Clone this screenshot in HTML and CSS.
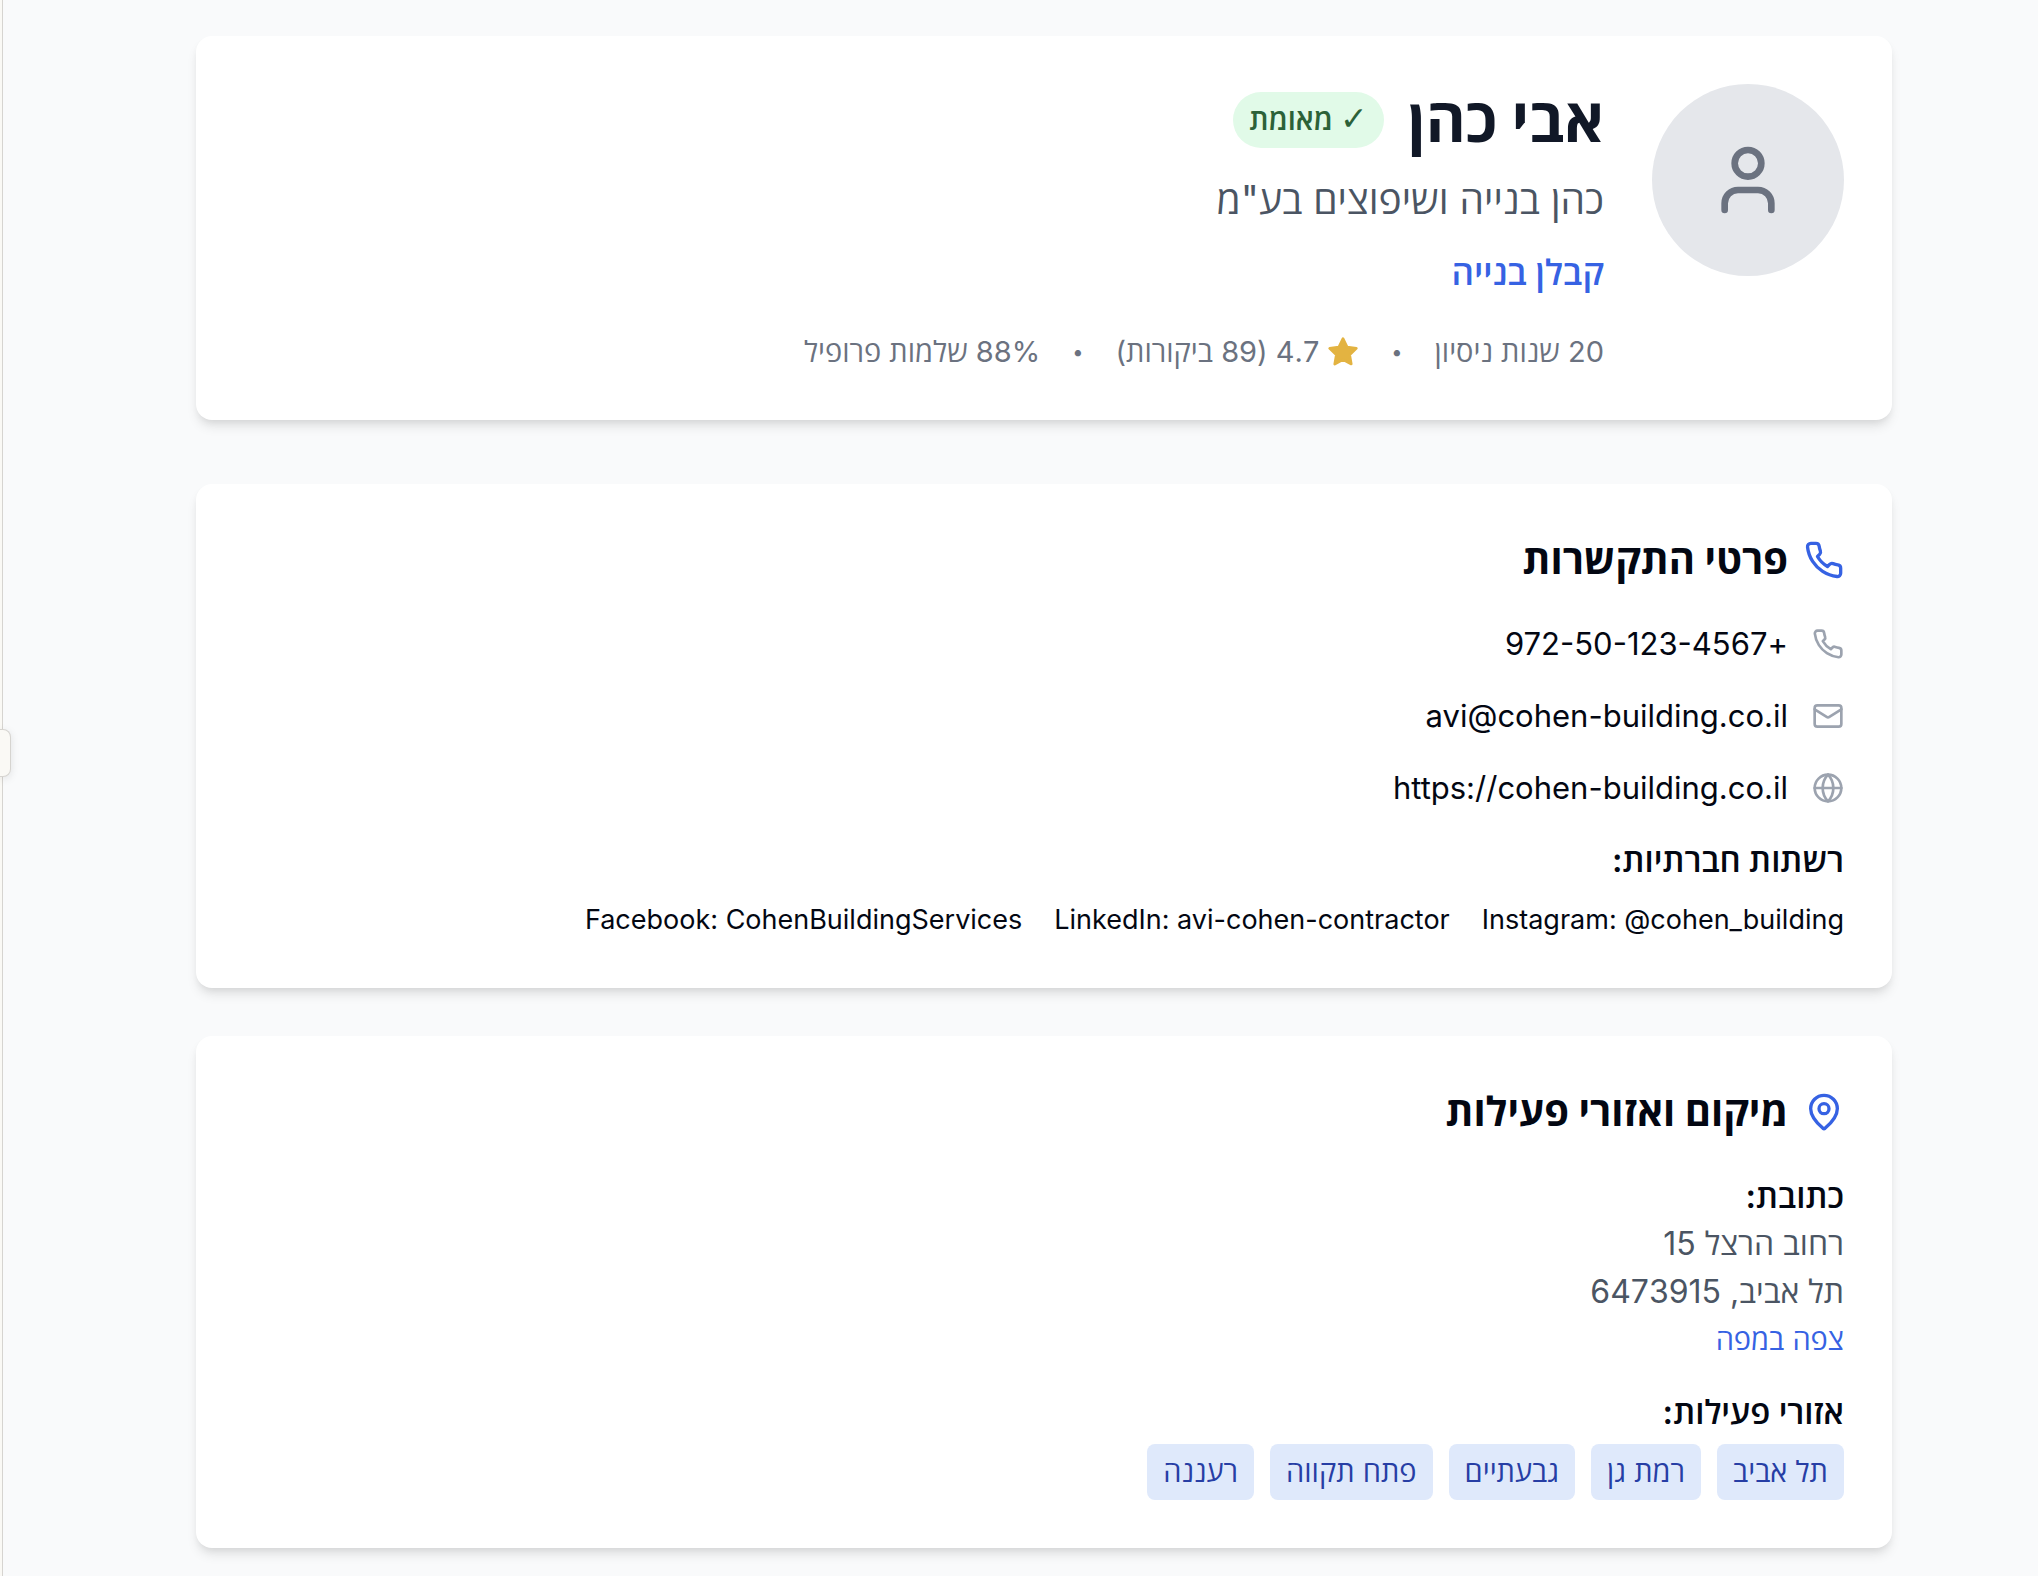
FILE: index.html
```html
<!DOCTYPE html>
<html lang="he" dir="rtl">
<head>
<meta charset="utf-8">
<meta name="viewport" content="width=device-width, initial-scale=1">
<title>אבי כהן</title>
<link rel="stylesheet" href="styles.css">
</head>
<body>
<button class="panel-handle" type="button" aria-label="פתיחת חלונית"></button>
<main class="page">
  <header class="card profile">
    <div class="avatar">
      <svg class="avatar-icon" viewBox="0 0 24 24" aria-hidden="true"><path d="M19 21v-2a4 4 0 0 0-4-4H9a4 4 0 0 0-4 4v2"/><circle cx="12" cy="7" r="4"/></svg>
    </div>
    <div class="profile-info">
      <div class="name-row">
        <h1 class="name">אבי כהן</h1>
        <span class="badge"><span class="check">✓</span> מאומת</span>
      </div>
      <p class="company">כהן בנייה ושיפוצים בע"מ</p>
      <p class="trade">קבלן בנייה</p>
      <div class="stats">
        <span>20 שנות ניסיון</span>
        <span class="dot">•</span>
        <span class="rating">
          <svg class="star" viewBox="0 0 24 24" aria-hidden="true"><polygon points="12 2 15.09 8.26 22 9.27 17 14.14 18.18 21.02 12 17.77 5.82 21.02 7 14.14 2 9.27 8.91 8.26 12 2"/></svg>
          <span>4.7 (89 ביקורות)</span>
        </span>
        <span class="dot">•</span>
        <span>88% שלמות פרופיל</span>
      </div>
    </div>
  </header>

  <section class="card">
    <h2 class="card-title">
      <svg class="title-icon" viewBox="0 0 24 24" aria-hidden="true"><path d="M22 16.92v3a2 2 0 0 1-2.18 2 19.79 19.79 0 0 1-8.63-3.07 19.5 19.5 0 0 1-6-6 19.79 19.79 0 0 1-3.07-8.67A2 2 0 0 1 4.11 2h3a2 2 0 0 1 2 1.72 12.84 12.84 0 0 0 .7 2.81 2 2 0 0 1-.45 2.11L8.09 9.91a16 16 0 0 0 6 6l1.27-1.27a2 2 0 0 1 2.11-.45 12.84 12.84 0 0 0 2.81.7A2 2 0 0 1 22 16.92z"/></svg>
      פרטי התקשרות
    </h2>
    <ul class="contacts">
      <li class="contact">
        <svg class="contact-icon" viewBox="0 0 24 24" aria-hidden="true"><path d="M22 16.92v3a2 2 0 0 1-2.18 2 19.79 19.79 0 0 1-8.63-3.07 19.5 19.5 0 0 1-6-6 19.79 19.79 0 0 1-3.07-8.67A2 2 0 0 1 4.11 2h3a2 2 0 0 1 2 1.72 12.84 12.84 0 0 0 .7 2.81 2 2 0 0 1-.45 2.11L8.09 9.91a16 16 0 0 0 6 6l1.27-1.27a2 2 0 0 1 2.11-.45 12.84 12.84 0 0 0 2.81.7A2 2 0 0 1 22 16.92z"/></svg>
        <a href="tel:+972501234567">+972-50-123-4567</a>
      </li>
      <li class="contact">
        <svg class="contact-icon" viewBox="0 0 24 24" aria-hidden="true"><rect width="20" height="16" x="2" y="4" rx="2"/><path d="m22 7-8.97 5.7a1.94 1.94 0 0 1-2.06 0L2 7"/></svg>
        <a href="mailto:avi@cohen-building.co.il">avi@cohen-building.co.il</a>
      </li>
      <li class="contact">
        <svg class="contact-icon" viewBox="0 0 24 24" aria-hidden="true"><circle cx="12" cy="12" r="10"/><path d="M12 2a14.5 14.5 0 0 0 0 20 14.5 14.5 0 0 0 0-20"/><path d="M2 12h20"/></svg>
        <a href="https://cohen-building.co.il">https://cohen-building.co.il</a>
      </li>
    </ul>
    <h3 class="label">רשתות חברתיות:</h3>
    <ul class="socials">
      <li>Instagram: @cohen_building</li>
      <li>LinkedIn: avi-cohen-contractor</li>
      <li>Facebook: CohenBuildingServices</li>
    </ul>
  </section>

  <section class="card">
    <h2 class="card-title">
      <svg class="title-icon" viewBox="0 0 24 24" aria-hidden="true"><path d="M20 10c0 4.993-5.539 10.193-7.399 11.799a1 1 0 0 1-1.202 0C9.539 20.193 4 14.993 4 10a8 8 0 0 1 16 0"/><circle cx="12" cy="10" r="3"/></svg>
      מיקום ואזורי פעילות
    </h2>
    <h3 class="label">כתובת:</h3>
    <address class="address">רחוב הרצל 15<br>תל אביב, 6473915</address>
    <a class="map-link" href="#map">צפה במפה</a>
    <h3 class="label">אזורי פעילות:</h3>
    <ul class="tags">
      <li class="tag">תל אביב</li>
      <li class="tag">רמת גן</li>
      <li class="tag">גבעתיים</li>
      <li class="tag">פתח תקווה</li>
      <li class="tag">רעננה</li>
    </ul>
  </section>
</main>
</body>
</html>
```
FILE: styles.css
```css
* {
  box-sizing: border-box;
}

html {
  background: #faf9f5;
}

body {
  margin: 0 0 0 2px;
  min-height: 100vh;
  border-left: 1px solid #d6d4d0;
  background: #f9fafb;
  color: #030712;
  font-family: Inter, "Open Sans", "Liberation Sans", sans-serif;
  font-size: 32px;
  line-height: 48px;
}

h1,
h2,
h3,
p,
ul {
  margin: 0;
  padding: 0;
  list-style: none;
}

a {
  color: inherit;
  text-decoration: none;
}

svg {
  flex-shrink: 0;
  fill: none;
  stroke: currentColor;
  stroke-width: 2;
  stroke-linecap: round;
  stroke-linejoin: round;
}

.page {
  padding: 36px 146px 28px 193px;
}

.card {
  margin-bottom: 48px;
  padding: 48px;
  border-radius: 16px;
  background: #fff;
  box-shadow: 0 8px 12px -2px rgba(0, 0, 0, 0.1), 0 4px 8px -4px rgba(0, 0, 0, 0.1);
}

.card:last-child {
  margin-bottom: 0;
}

.profile {
  display: flex;
  align-items: flex-start;
  gap: 48px;
  margin-bottom: 64px;
}

.avatar {
  display: flex;
  flex-shrink: 0;
  align-items: center;
  justify-content: center;
  width: 192px;
  height: 192px;
  border-radius: 50%;
  background: #e5e7eb;
  color: #6b7280;
}

.avatar-icon {
  width: 80px;
  height: 80px;
}

.name-row {
  display: flex;
  align-items: center;
  gap: 24px;
  margin-bottom: 16px;
}

.name {
  color: #111827;
  font-size: 61px;
  font-weight: 700;
  line-height: 72px;
}

.badge {
  padding: 8px 16px;
  border-radius: 28px;
  background: #e1fae8;
  color: #2c6138;
  font-size: 29px;
  font-weight: 600;
  line-height: 40px;
}

.check {
  font-family: "DejaVu Sans", sans-serif;
  font-size: 33px;
  font-weight: 400;
  line-height: 1;
}

.company {
  margin-bottom: 16px;
  color: #4b5563;
  font-size: 39px;
  line-height: 56px;
}

.trade {
  margin-bottom: 32px;
  color: #3662e3;
  font-size: 35px;
  font-weight: 600;
  line-height: 56px;
}

.stats {
  display: flex;
  flex-wrap: wrap;
  gap: 32px;
  color: #6b7280;
  font-size: 29px;
  line-height: 40px;
}

.dot {
  font-size: 20px;
}

.rating {
  display: flex;
  align-items: center;
  gap: 8px;
}

.star {
  width: 32px;
  height: 32px;
  fill: #e3b341;
  stroke: #e3b341;
}

.card-title {
  display: flex;
  align-items: center;
  gap: 16px;
  margin-bottom: 32px;
  font-size: 40px;
  font-weight: 700;
  line-height: 56px;
}

.title-icon {
  width: 40px;
  height: 40px;
  color: #3662e3;
}

.contacts {
  display: grid;
  gap: 24px;
  margin-bottom: 24px;
  font-size: 31px;
}

.contact {
  display: flex;
  align-items: center;
  gap: 24px;
}

.contact-icon {
  width: 32px;
  height: 32px;
  color: #9ca3af;
}

.label {
  font-size: 33px;
  font-weight: 600;
  line-height: 48px;
}

.socials {
  display: flex;
  flex-wrap: wrap;
  gap: 32px;
  margin-top: 16px;
  font-size: 27px;
  line-height: 40px;
}

.address {
  color: #4b5563;
  font-style: normal;
}

.map-link {
  display: block;
  width: fit-content;
  margin-bottom: 24px;
  color: #3662e3;
  font-size: 29px;
}

.tags {
  display: flex;
  flex-wrap: wrap;
  gap: 16px;
  margin-top: 8px;
}

.tag {
  padding: 8px 16px;
  border-radius: 8px;
  background: #dfe9fb;
  color: #273ea5;
  font-size: 29px;
  line-height: 40px;
}

.panel-handle {
  position: absolute;
  top: 729px;
  left: 0;
  width: 11px;
  height: 48px;
  padding: 0;
  border: 1px solid #d6d4d0;
  border-left: 0;
  border-radius: 0 8px 8px 0;
  background: #faf9f5;
  box-shadow: 0 2px 8px rgba(0, 0, 0, 0.1);
}
```
